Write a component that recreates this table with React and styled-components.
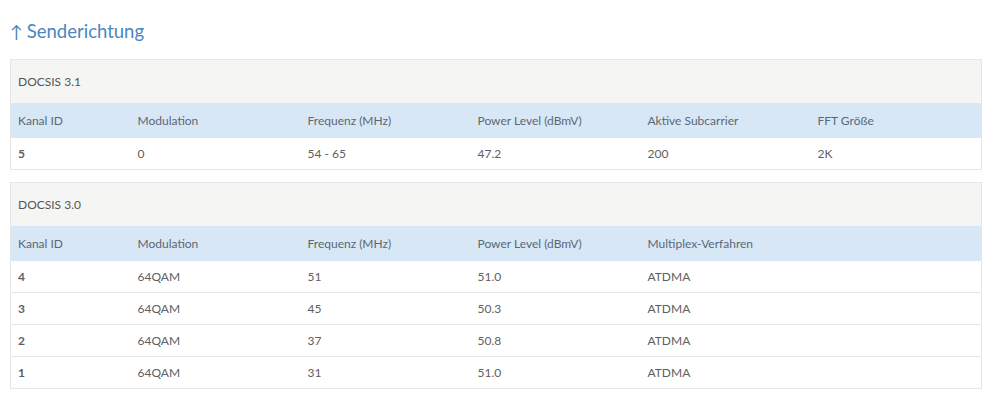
import styled, { createGlobalStyle } from "styled-components";

const GlobalStyle = createGlobalStyle`
  body {
    margin: 0;
    background: #ffffff;
    font-family: "Lato", "Open Sans", sans-serif;
  }
`;

const Page = styled.div`
  width: 971px;
  padding: 18px 0 0 10px;
`;

const Title = styled.h2`
  margin: 0 0 15px 0;
  height: 26px;
  font-size: 18.5px;
  font-weight: 400;
  line-height: 26px;
  color: #4a86c0;
`;

const Arrow = styled.span`
  display: inline-block;
  margin-right: 4px;
  font-size: 17px;
`;

const Table = styled.table`
  width: 100%;
  border-collapse: collapse;
  border: 1px solid #e6e6e6;
  margin-bottom: 12px;
  table-layout: fixed;
  font-size: 12px;
`;

const Caption = styled.td`
  height: 43px;
  padding: 0 7px;
  background: #f5f5f3;
  color: #555;
`;

const HeadCell = styled.th`
  height: 35px;
  padding: 0 7px;
  background: #d8e7f5;
  color: #5a6776;
  font-weight: 400;
  text-align: left;
`;

const Row = styled.tr`
  & + & td {
    border-top: 1px solid #e6e6e6;
  }
`;

const Cell = styled.td`
  height: 31px;
  padding: 0 7px;
  color: #606060;
  font-weight: ${(p) => (p.$bold ? 700 : 400)};
`;

const widths = [120, 170, 170, 170, 170, 171];

function ChannelTable({ title, columns, rows }) {
  return (
    <Table>
      <colgroup>
        {widths.map((w, i) => (
          <col key={i} style={{ width: w }} />
        ))}
      </colgroup>
      <tbody>
        <tr>
          <Caption colSpan={6}>{title}</Caption>
        </tr>
        <tr>
          {widths.map((_, i) => (
            <HeadCell key={i}>{columns[i] || ""}</HeadCell>
          ))}
        </tr>
        {rows.map((r, ri) => (
          <Row key={ri}>
            {widths.map((_, i) => (
              <Cell key={i} $bold={i === 0}>
                {r[i] || ""}
              </Cell>
            ))}
          </Row>
        ))}
      </tbody>
    </Table>
  );
}

export default function App() {
  return (
    <>
      <GlobalStyle />
      <Page>
        <Title>
          <Arrow>↑</Arrow>Senderichtung
        </Title>
        <ChannelTable
          title="DOCSIS 3.1"
          columns={["Kanal ID", "Modulation", "Frequenz (MHz)", "Power Level (dBmV)", "Aktive Subcarrier", "FFT Größe"]}
          rows={[["5", "0", "54 - 65", "47.2", "200", "2K"]]}
        />
        <ChannelTable
          title="DOCSIS 3.0"
          columns={["Kanal ID", "Modulation", "Frequenz (MHz)", "Power Level (dBmV)", "Multiplex-Verfahren"]}
          rows={[
            ["4", "64QAM", "51", "51.0", "ATDMA"],
            ["3", "64QAM", "45", "50.3", "ATDMA"],
            ["2", "64QAM", "37", "50.8", "ATDMA"],
            ["1", "64QAM", "31", "51.0", "ATDMA"],
          ]}
        />
      </Page>
    </>
  );
}
